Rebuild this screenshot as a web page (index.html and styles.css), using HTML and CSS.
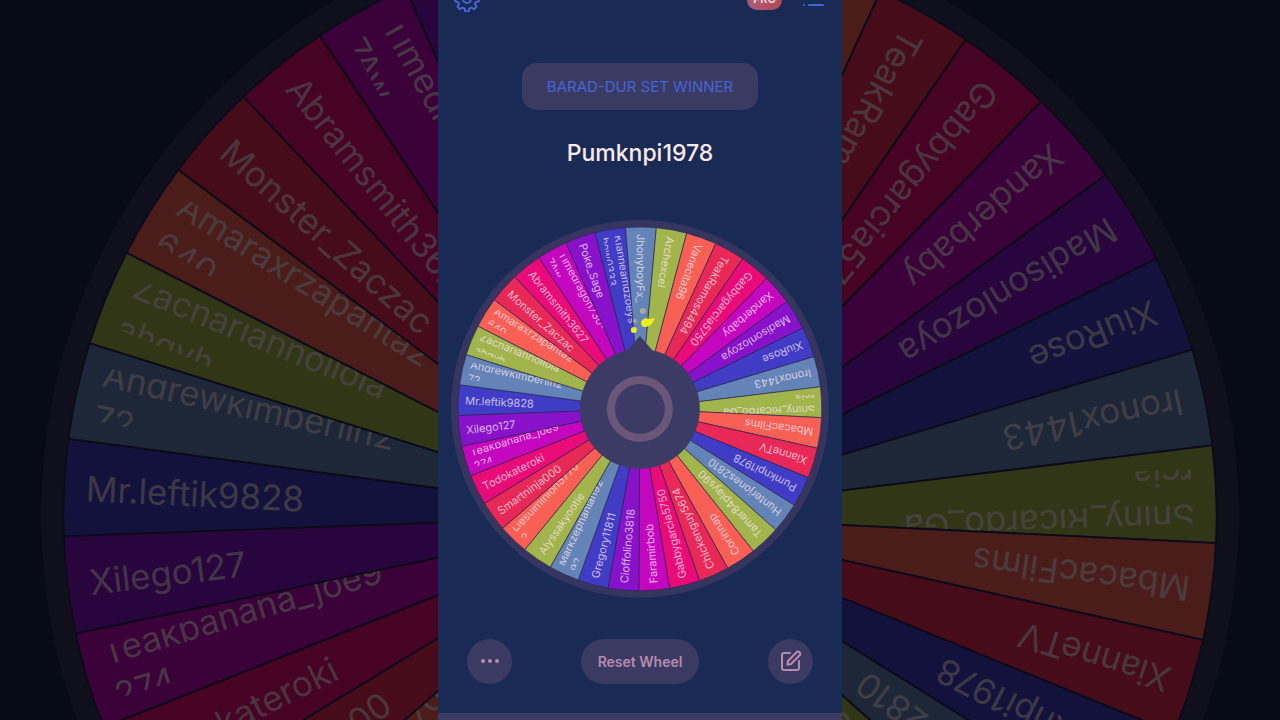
FILE: index.html
```html
<!DOCTYPE html>
<html lang="en">

<head>
    <meta charset="UTF-8">
    <meta name="viewport" content="width=device-width, initial-scale=1.0">
    <title>Barad-dur Set Winner</title>
    <link rel="stylesheet" href="styles.css">
</head>

<body>
    <svg class="backdrop" viewBox="0 0 404 720" preserveAspectRatio="xMidYMid slice" aria-hidden="true">
        <rect class="backdrop-fill" width="404" height="720" />
        <use href="#wheel" x="202" y="409" />
    </svg>

    <main class="phone">
        <header class="topbar">
            <button class="icon-button" aria-label="Settings">
                <svg width="26" height="26" viewBox="0 0 26 26">
                    <path d="M11.4 1.8h3.2l.9 3 1.9.8 2.8-1.5 2.3 2.3-1.5 2.8.8 1.9 3 .9v3.2l-3 .9-.8 1.9 1.5 2.8-2.3 2.3-2.8-1.5-1.9.8-.9 3h-3.2l-.9-3-1.9-.8-2.8 1.5-2.3-2.3L5 18l-.8-1.9-3-.9V12l3-.9L5 9.200 3.500 6.400l2.300-2.300 2.800 1.500 1.900-.8z" />
                    <circle cx="13" cy="13" r="4" />
                </svg>
            </button>
            <div class="topbar-right">
                <span class="pro">PRO</span>
                <button class="icon-button" aria-label="Lists">
                    <svg width="24" height="26" viewBox="0 0 24 26">
                        <path d="M7 6h14M7 12h14M7 19h14M2 6h.1M2 12h.1M2 19h.1" />
                    </svg>
                </button>
            </div>
        </header>

        <button class="title">BARAD-DUR SET WINNER</button>
        <h1 class="winner">Pumknpi1978</h1>

        <svg class="wheel" viewBox="-190 -190 380 380" role="img" aria-label="Prize wheel">
            <g id="wheel">
                <circle class="rim" r="189" />
                <g id="slices"></g>
                <path class="hub" d="M0-73L20-50H-20Z" />
                <circle class="hub" r="60" />
                <circle class="hub-ring" r="29" />
            </g>
            <g class="confetti">
                <path d="M1-87Q4-92 9-90L15-91Q13-84 6-82Q1-81 1-87Z" />
                <circle cx="-6" cy="-79" r="3" />
                <circle class="faint" cx="3" cy="-98" r="3" />
                <circle class="faint" cx="-5" cy="-88" r="2" />
            </g>
        </svg>

        <div class="actions">
            <button class="round" aria-label="More">
                <svg width="20" height="6" viewBox="0 0 20 6">
                    <circle cx="3" cy="3" r="2" />
                    <circle cx="10" cy="3" r="2" />
                    <circle cx="17" cy="3" r="2" />
                </svg>
            </button>
            <button class="reset">Reset Wheel</button>
            <button class="round edit" aria-label="Edit">
                <svg width="22" height="24" viewBox="0 0 22 24">
                    <path d="M10 4H4Q2 4 2 6V19Q2 21 4 21H17Q19 21 19 19V12" />
                    <path d="M8 12L16.500 3.300Q18 2 19.500 3.300Q21 4.800 19.700 6.300L11 15L7.500 15.700Z" />
                </svg>
            </button>
        </div>
        <div class="bottom-bar"></div>
    </main>

    <script src="script.js"></script>
</body>

</html>
```

FILE: styles.css
```css
body {
    margin: 0;
    min-height: 100vh;
    display: flex;
    justify-content: center;
    overflow: hidden;
    background: #000;
    font-family: 'Inter', 'Liberation Sans', sans-serif;
}

button {
    border: none;
    padding: 0;
    font-family: inherit;
    cursor: pointer;
}

/* enlarged, darkened copy of the wheel behind the phone */
.backdrop {
    position: absolute;
    inset: 0;
    width: 100%;
    height: 100%;
    opacity: 0.3;
}

.backdrop-fill {
    fill: #15264c;
}

.phone {
    position: relative;
    display: flex;
    flex-direction: column;
    align-items: center;
    height: 100vh;
    aspect-ratio: 101 / 180;
    overflow: hidden;
    background: #192b54;
}

.topbar {
    display: flex;
    justify-content: space-between;
    align-items: center;
    align-self: stretch;
    height: 26px;
    margin-top: -14px;
    padding: 0 16px;
}

.topbar-right {
    display: flex;
    align-items: center;
    gap: 20px;
}

.icon-button {
    display: flex;
    background: none;
}

.icon-button svg {
    fill: none;
    stroke: #4566d8;
    stroke-width: 2;
    stroke-linecap: round;
    stroke-linejoin: round;
}

.pro {
    padding: 0 6px;
    border-radius: 10px;
    background: linear-gradient(90deg, #a95d78, #b04a58);
    color: #f0d5dc;
    font-size: 11px;
    font-weight: 700;
    line-height: 22px;
}

.title {
    height: 47px;
    margin-top: 51px;
    padding: 0 25px;
    border-radius: 15px;
    background: #3b3a63;
    color: #4565d6;
    font-size: 15px;
}

.winner {
    margin: 28px 0 0;
    color: #fbe9ec;
    font-size: 23px;
    font-weight: 500;
    line-height: 30px;
}

.wheel {
    width: 94%;
    margin-top: 51px;
}

.rim {
    fill: #363560;
}

.slice {
    stroke: #2a2450;
    stroke-width: 0.6;
}

.label {
    fill: #fbe6f0;
    fill-opacity: 0.75;
    font-size: 11px;
}

.hub {
    fill: #3b3b65;
}

.hub-ring {
    fill: none;
    stroke: #6a5678;
    stroke-width: 8;
}

.confetti {
    fill: #f2ec1c;
}

.confetti .faint {
    fill: #c9b98a;
    fill-opacity: 0.7;
}

.actions {
    display: flex;
    justify-content: space-between;
    align-items: center;
    align-self: stretch;
    margin-top: 40px;
    padding: 0 29px;
}

.round,
.reset {
    display: flex;
    justify-content: center;
    align-items: center;
    height: 45px;
    border-radius: 23px;
    background: #3b3a63;
    color: #b78aae;
}

.round {
    width: 45px;
}

.round svg {
    fill: #b78aae;
}

.edit svg {
    fill: none;
    stroke: #b78aae;
    stroke-width: 2;
    stroke-linecap: round;
    stroke-linejoin: round;
}

.reset {
    padding: 0 17px;
    font-size: 14px;
    font-weight: 600;
}

.bottom-bar {
    align-self: stretch;
    flex: 1;
    margin-top: 29px;
    background: #3a3a62;
}
```

FILE: script.js
```js
const colors = {
    blue: '#403cc6',
    steel: '#6483b6',
    olive: '#a2b44c',
    orange: '#f86056',
    red: '#e82856',
    pink: '#e90b78',
    magenta: '#c406be',
    purple: '#8812ca'
};

// clockwise, starting from the left
const entries = [
    ['blue', 'Mr.leftik9828'],
    ['steel', 'Andrewkimberlin2', '72'],
    ['olive', 'Zachariahholiola', 'ahgyh'],
    ['orange', 'Amaraxrzapanta2', '640'],
    ['red', 'Monster_Zaczac'],
    ['pink', 'Abramsmith3627'],
    ['magenta', 'Timedragon730-', '7Aw'],
    ['purple', 'Poke_Sage'],
    ['blue', 'Kianneamdzoeys', 'how0333'],
    ['steel', 'JhonyboyFx_'],
    ['olive', 'Archexcel'],
    ['orange', 'Vanecita96'],
    ['red', 'TeakRamos4494'],
    ['pink', 'Gabbygarcia5750'],
    ['magenta', 'Xanderbaby'],
    ['purple', 'Madisonlozoya'],
    ['blue', 'XiuRose'],
    ['steel', 'Ironox1443'],
    ['olive', 'Shiny_Ricardo_Ga', 'rcia'],
    ['orange', 'MbacacFilms'],
    ['red', 'XianneTV'],
    ['blue', 'Pumknpi1978'],
    ['steel', 'Hunterjones2810'],
    ['olive', 'Tamer84plays90'],
    ['orange', 'Corinnap'],
    ['red', 'Chickenguy5674'],
    ['pink', 'Gabbygarcia5750'],
    ['magenta', 'Faramirbob'],
    ['purple', 'Cioffolino3818'],
    ['blue', 'Gregory11811'],
    ['steel', 'Markzephaniah92', '92'],
    ['olive', 'Alyssakyootie'],
    ['orange', 'Liesulminion5770', '2'],
    ['red', 'Smartninja000'],
    ['pink', 'Todokateroki'],
    ['magenta', 'Teakbanana_joe9', '274'],
    ['purple', 'Xilego127']
];

const radius = 182;
const step = 360 / entries.length;
const half = step / 2 * Math.PI / 180;
const x = -radius * Math.cos(half);
const y = radius * Math.sin(half);

// long names wrap to two lines inside a box that is too low for them
let markup = '<clipPath id="label-box"><rect x="-178" y="-9" width="120" height="17" /></clipPath>';

entries.forEach(([color, first, second], i) => {
    const angle = -2.1 + step * (i + 0.5);
    markup += `<g transform="rotate(${angle})">`;
    markup += `<path class="slice" fill="${colors[color]}" d="M0 0L${x} ${y}A${radius} ${radius} 0 0 1 ${x} ${-y}Z" />`;
    if (second) {
        markup += `<g clip-path="url(#label-box)"><text class="label" x="-175" y="-3">${first}</text>`;
        markup += `<text class="label" x="-175" y="11">${second}</text></g>`;
    } else {
        markup += `<text class="label" x="-175" y="4">${first}</text>`;
    }
    markup += '</g>';
});

document.getElementById('slices').innerHTML = markup;
```
